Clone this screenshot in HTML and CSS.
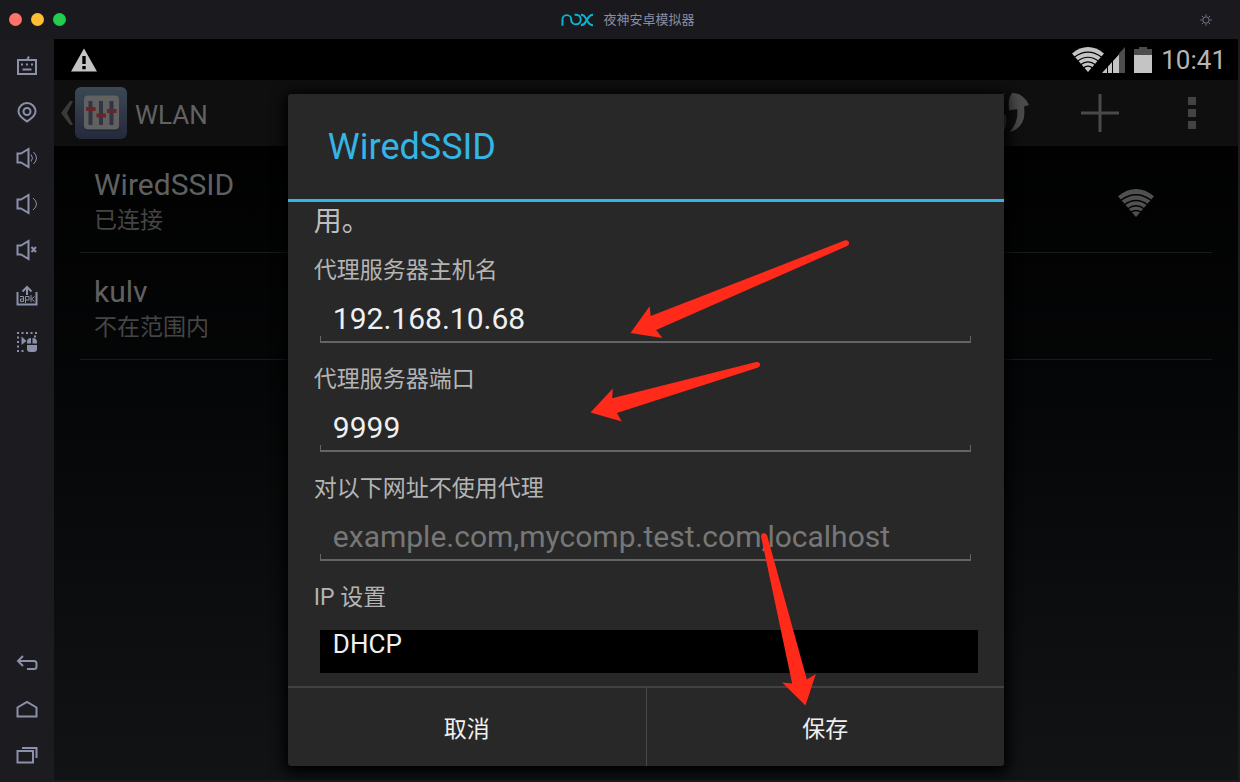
FILE: index.html
```html
<!DOCTYPE html>
<html lang="zh-CN">
<head>
<meta charset="utf-8">
<meta name="viewport" content="width=device-width, initial-scale=1">
<title>夜神安卓模拟器</title>
<link rel="stylesheet" href="styles.css">
</head>
<body>
<svg class="defs" aria-hidden="true">
  <symbol id="wifi" viewBox="0 0 36 28">
    <path d="M0 7.200 Q18 -7.200 36 7.200 L18 28 Z" fill="currentColor"/>
    <path d="M2.500 11.500 Q18 0 33.500 11.500 M6 16 Q18 7 30 16 M9.500 20 Q18 13.500 26.500 20 M12.500 23.500 Q18 19.500 23.500 23.500" fill="none" stroke="var(--gap)" stroke-width="1.300"/>
  </symbol>
</svg>
<header class="titlebar">
  <div class="lights">
    <button class="light close" aria-label="关闭"></button>
    <button class="light minimise" aria-label="最小化"></button>
    <button class="light maximise" aria-label="最大化"></button>
  </div>
  <div class="brand">
    <svg class="logo" viewBox="0 0 34 14" aria-hidden="true"><path d="M1.500 13V6.500a4.500 4.500 0 0 1 9 0v1a5 5 0 1 0 5-6H14M20.500 1.500c4 0 4.500 3 6 5.500s2.500 5.500 6.500 5.500M33 1.500c-4 0-5 3-6.500 5.500s-2 5.500-6 5.500"/></svg>
    <h1 class="app-name">夜神安卓模拟器</h1>
  </div>
  <button class="gear" aria-label="设置"><svg viewBox="0 0 12 12"><circle cx="6" cy="6" r="3.200"/><path d="M6 .3v1.500M6 10.200v1.500M.3 6h1.500M10.200 6h1.500M1.900 1.900l1.200 1.200M8.900 8.900l1.200 1.200M1.900 10.100l1.200-1.200M8.900 3.100l1.200-1.200"/></svg></button>
</header>
<div class="workspace">
  <nav class="sidebar" aria-label="工具栏">
    <div class="tools">
      <button class="tool" aria-label="键盘"><svg viewBox="0 0 22 22"><path d="M2 5h18v14H2zM11 5l2-3.500"/><path class="solid" d="M5 8.500h2v2H5zM10 8.500h2v2h-2zM15 8.500h2v2h-2zM6.500 13.500h9v2h-9z"/></svg></button>
      <button class="tool" aria-label="定位"><svg viewBox="0 0 22 22"><path d="M11 20.500C7 17.800 2.500 15 2.500 10.500a8.500 8.500 0 0 1 17 0c0 4.500-4.500 7.300-8.500 10z"/><circle cx="11" cy="10.500" r="3.500"/></svg></button>
      <button class="tool" aria-label="音量加"><svg viewBox="0 0 22 22"><path d="M1.500 6.500H5L12.500 2v18L5 15.500H1.500z"/><path class="thin" d="M15 7.500q3 3.500 0 7M17.500 5q6 6 0 12"/></svg></button>
      <button class="tool" aria-label="音量减"><svg viewBox="0 0 22 22"><path d="M1.500 6.500H5L12.500 2v18L5 15.500H1.500z"/><path class="thin" d="M17 5q7 6 0 12"/></svg></button>
      <button class="tool" aria-label="静音"><svg viewBox="0 0 22 22"><path d="M1.500 6.500H5L12.500 2v18L5 15.500H1.500zM15.500 8l4.500 5M20 8l-4.500 5"/></svg></button>
      <button class="tool" aria-label="安装 APK"><svg viewBox="0 0 22 22"><path d="M1.500 7v12.500h19V7M11 10V2M6.500 6.500L11 2l4.500 4.500"/><path class="thin" d="M4 11.500h3.500v5H4.500v-2.500h3M9.500 18v-6.500h3.500v3.500H9.500M15 10v7M18.500 11.500L15.500 14l3 2.500"/></svg></button>
      <button class="tool" aria-label="宏录制"><svg viewBox="0 0 22 22"><path class="solid" d="M1 1h2v2H1zM5.500 1h2v2h-2zM10 1h2v2h-2zM14.500 1h2v2h-2zM19 1h2v2h-2zM1 5.500h2v2H1zM1 10h2v2H1zM1 14.500h2v2H1zM1 19h2v2H1zM5.500 19h2v2h-2zM5.500 5.500L10.500 10l-5 4zM11 12.500V11q0-4 4-4v5.500zM16.500 7Q21 7 21 11v1.500h-4.500zM11 14h10v4q0 3-3 3h-4q-3 0-3-3zM18 4.500h2v2h-2z"/></svg></button>
    </div>
    <div class="tools">
      <button class="tool" aria-label="返回"><svg viewBox="0 0 22 22"><path d="M7 4L2 9l5 5M2 9h16q2.500 0 2.500 2.500v3q0 2.500-2.500 2.500h-7"/></svg></button>
      <button class="tool" aria-label="主页"><svg viewBox="0 0 22 22"><path d="M1.500 18.500V9.500L11 4l9.500 5.500v9z"/></svg></button>
      <button class="tool" aria-label="最近任务"><svg viewBox="0 0 22 22"><path d="M1.500 7H17v11.500H1.500zM6 4h14.500v10"/></svg></button>
    </div>
  </nav>
  <main class="device">
    <div class="statusbar">
      <svg class="warning" viewBox="0 0 26 24" aria-label="警告"><path d="M13 .5L26 23.500H0z" fill="#c4c4c4"/><path d="M11.300 8h3.400v8h-3.400zM11.300 18h3.400v3.200h-3.400z" fill="#000"/></svg>
      <div class="status">
        <svg class="status-wifi" aria-hidden="true"><use href="#wifi"/></svg>
        <svg class="signal" viewBox="0 0 23 26" aria-hidden="true"><path d="M17 6.500L23 0v26h-6z" fill="#4d4d4d"/><path d="M0 26L17 7.500V26z" fill="#c4c4c4"/><path d="M5.500 18v8M10.500 13v13" stroke="#000"/></svg>
        <svg class="battery" viewBox="0 0 18 26" aria-hidden="true"><path d="M5 0h8v2h5v6H0V2h5z" fill="#4d4d4d"/><path d="M0 8h18v18H0z" fill="#c4c4c4"/></svg>
        <time class="clock">10:41</time>
      </div>
    </div>
    <div class="screen">
      <div class="actionbar">
        <button class="up"><svg class="chevron" viewBox="0 0 12 24" aria-hidden="true"><path d="M9 0h3L6 12l6 12H9L0 12z" fill="#3a3a3a"/></svg><svg class="app-icon" viewBox="0 0 52 52" aria-hidden="true"><defs><linearGradient id="tile" x2="0" y2="1"><stop stop-color="#3c4854"/><stop offset="1" stop-color="#25293c"/></linearGradient></defs><rect width="52" height="52" rx="6" fill="url(#tile)"/><rect x="9" y="10" width="35" height="34" rx="4" fill="#1e2433"/><rect x="9" y="8.500" width="35" height="34" rx="4" fill="#616161"/><path d="M15.500 14v24M26 14v24M36.500 14v24" stroke="#303641" stroke-width="4"/><path d="M11 22h9.500M21.500 28.500h9.500M32 24h9.500" stroke="#662528" stroke-width="4"/></svg><span>WLAN</span></button>
        <div class="actions">
          <button class="action" aria-label="WPS"><svg class="wps" viewBox="984 90 48 46"><g id="sync"><path d="M1012.500 92.700Q1024 94 1029 105L1024 106.500Q1027 127 1010 132Q1019 121 1017 109L1009.300 110.500Q1007 99 1012.500 92.700z" fill="#4a4a4a"/></g><use href="#sync" transform="rotate(180 1007.500 112.500)"/></svg></button>
          <button class="action" aria-label="添加网络"><svg class="plus" viewBox="0 0 40 40"><path d="M20 1v38M1 20h38" stroke="#4a4a4a" stroke-width="3"/></svg></button>
          <button class="action" aria-label="更多选项"><svg class="more" viewBox="0 0 8 32"><path d="M0 0h8v8H0zM0 12h8v8H0zM0 24h8v8H0z" fill="#434343"/></svg></button>
        </div>
      </div>
      <ul class="networks">
        <li class="network"><div><h2 class="ssid">WiredSSID</h2><p class="state">已连接</p></div><svg class="strength" aria-hidden="true"><use href="#wifi"/></svg></li>
        <li class="network"><div><h2 class="ssid">kulv</h2><p class="state">不在范围内</p></div></li>
      </ul>
      <div class="overlay">
        <form class="dialog" role="dialog" aria-labelledby="dialog-title">
          <h2 class="dialog-title" id="dialog-title">WiredSSID</h2>
          <div class="dialog-body">
            <p class="note">用。</p>
            <div class="field"><label for="host">代理服务器主机名</label><input id="host" type="text" value="192.168.10.68"></div>
            <div class="field"><label for="port">代理服务器端口</label><input id="port" type="text" value="9999"></div>
            <div class="field"><label for="bypass">对以下网址不使用代理</label><input id="bypass" type="text" placeholder="example.com,mycomp.test.com,localhost"></div>
            <div class="field choice"><label for="ip">IP 设置</label><select id="ip"><option>DHCP</option></select></div>
          </div>
          <div class="buttons"><button type="button">取消</button><button type="submit">保存</button></div>
          <svg class="arrows" viewBox="288 94 716 672" aria-hidden="true">
            <path d="M630.300 333L649.500 306.300L650.500 316L845 240.300Q848 239.800 849 242.500Q849 245 847 246L656 330L662.300 338z"/>
            <path d="M590.300 412.600L612.700 388.600L612 398.300L756 362Q759 361.500 760 364Q760 367 758 367.500L616.700 413L621.700 421.500z"/>
            <path d="M805.300 705.500L815.700 674L806.700 679.500L767 535.500Q766 533 763.500 533Q760.500 533.500 761 537L792 683.500L782 682.500z"/>
          </svg>
        </form>
      </div>
    </div>
  </main>
</div>
</body>
</html>
```
FILE: styles.css
```css
* { box-sizing: border-box; }
body {
  margin: 0;
  min-height: 100vh;
  display: flex;
  flex-direction: column;
  background: #1c1b20;
  font-family: Roboto, "Noto Sans CJK SC", sans-serif;
}
h1, h2, p, ul { margin: 0; padding: 0; font-weight: 400; }
button { border: 0; padding: 0; background: none; color: inherit; font: inherit; }
svg { display: block; }
.defs { position: absolute; width: 0; height: 0; }

.titlebar {
  height: 39px;
  padding: 0 20px 0 9px;
  display: flex;
  align-items: center;
  justify-content: space-between;
  background: #1a191e;
}
.lights { display: flex; gap: 9px; }
.light { width: 13px; height: 13px; border-radius: 50%; }
.close { background: #ff736a; }
.minimise { background: #febf35; }
.maximise { background: #24cc50; }
.brand { display: flex; align-items: center; gap: 9px; margin-right: 2px; }
.logo { width: 33px; height: 14px; fill: none; stroke: #0cb4d4; stroke-width: 2; }
.app-name { font-size: 13px; line-height: 20px; color: #8a8da3; }
.gear { width: 28px; height: 28px; display: grid; place-items: center; }
.gear svg { width: 12px; height: 12px; fill: none; stroke: #777b92; stroke-width: 1; }

.workspace { flex: 1; display: flex; padding: 0 2px 2px 0; }
.sidebar {
  width: 54px;
  padding: 4px 0 2px;
  display: flex;
  flex-direction: column;
  justify-content: space-between;
}
.tool { width: 54px; height: 46px; display: grid; place-items: center; }
.tools { display: flex; flex-direction: column; }
.tool svg { width: 22px; height: 22px; fill: none; stroke: #8b91a9; stroke-width: 2; }
.tool .thin { stroke-width: 1; }
.tool .solid { fill: #8b91a9; stroke: none; }

.device { flex: 1; min-width: 0; display: flex; flex-direction: column; background: #000; }
.statusbar {
  height: 41px;
  padding: 0 12px 0 17px;
  display: flex;
  align-items: center;
  justify-content: space-between;
  color: #c4c4c4;
}
.warning { width: 26px; height: 24px; }
.status { display: flex; align-items: center; --gap: #000; }
.status-wifi { width: 32px; height: 25px; }
.signal { width: 23px; height: 26px; margin-left: -2px; }
.battery { width: 18px; height: 26px; margin: 0 9px; }
.clock { font-size: 26px; line-height: 40px; color: #b5b5b5; }

.screen {
  position: relative;
  flex: 1;
  background: linear-gradient(#000, #050607 45%, #111315);
}
.actionbar {
  height: 66px;
  display: flex;
  justify-content: space-between;
  background: #0f0f0f;
  color: #626262;
}
.up { padding-left: 7px; display: flex; align-items: center; font-size: 26px; }
.up span { padding-top: 3px; }
.chevron { width: 12px; height: 24px; }
.app-icon { width: 52px; height: 52px; margin: 0 8px 0 2px; }
.actions { display: flex; }
.action { width: 92px; display: grid; place-items: center; }
.wps { width: 48px; height: 46px; }
.plus { width: 40px; height: 40px; }
.more { width: 8px; height: 32px; }

.networks { list-style: none; padding: 0 26px; }
.network {
  padding: 21px 58px 14px 14px;
  display: flex;
  align-items: center;
  justify-content: space-between;
  border-bottom: 1px solid #1a1b1c;
}
.ssid { font-size: 30px; line-height: 36px; color: #606060; }
.state { font-size: 23px; line-height: 35px; color: #454545; }
.strength { width: 36px; height: 28px; color: #505050; --gap: #020303; }

.overlay {
  position: absolute;
  inset: 0;
  display: grid;
  place-items: center;
}
.dialog {
  position: relative;
  width: 60.5%;
  border-radius: 3px;
  background: #282828;
  box-shadow: 0 3px 14px 4px #000;
}
.dialog-title {
  padding: 2px 40px 0;
  font-size: 36px;
  line-height: 103px;
  color: #33b5e5;
  border-bottom: 3px solid #33b5e5;
}
.dialog-body { padding: 0 26px 13px; }
.note { font-size: 28px; line-height: 40px; color: #bebebe; margin-bottom: 13px; }
.field {
  margin-bottom: 21px;
  display: flex;
  flex-direction: column;
  gap: 6px;
}
.field label { font-size: 23px; line-height: 32px; color: #b4b4b4; }
.field input {
  height: 50px;
  margin: 0 7px 0 6px;
  padding: 0 13px;
  border: 0;
  outline: 0;
  border-radius: 0;
  font: 30px Roboto, sans-serif;
  color: #f0f0f0;
  background:
    linear-gradient(#646464, #646464) left bottom / 100% 2px no-repeat,
    linear-gradient(#646464, #646464) left bottom / 1px 7px no-repeat,
    linear-gradient(#646464, #646464) right bottom / 1px 7px no-repeat;
}
.field input::placeholder { color: #777; opacity: 1; }
.choice { gap: 16px; margin-bottom: 0; }
.choice select {
  appearance: none;
  height: 43px;
  margin: 0 0 0 6px;
  padding: 0 13px 15px;
  border: 0;
  border-radius: 0;
  background: #000;
  color: #f0f0f0;
  font: 26px/28px Roboto, sans-serif;
}
.buttons { display: flex; border-top: 2px solid #424242; }
.buttons button { flex: 1; height: 78px; font-size: 23px; color: #f0f0f0; }
.buttons button + button { border-left: 1px solid #484848; }
.arrows {
  position: absolute;
  inset: 0;
  width: 100%;
  height: 100%;
  fill: #ff2a1a;
  pointer-events: none;
}
```
